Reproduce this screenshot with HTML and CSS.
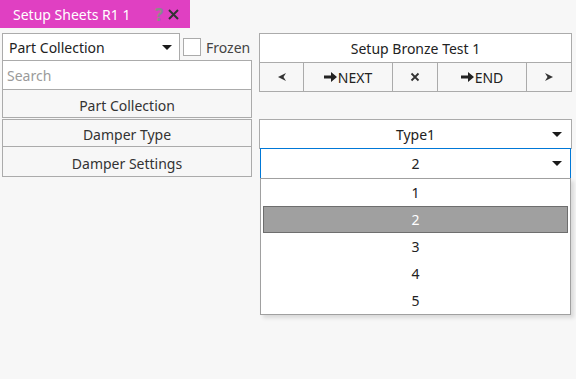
FILE: index.html
```html
<!DOCTYPE html>
<html lang="en">

<head>
  <meta charset="UTF-8" />
  <title>Setup Sheets R1 1</title>
  <link rel="stylesheet" href="styles.css">
</head>

<body>
  <div class="tab-bar">
    <div class="tab">
      <span class="tab-title">Setup Sheets R1 1</span>
      <span class="tab-help">?</span>
      <svg class="tab-close" width="11" height="11" viewBox="0 0 11 11">
        <path d="M1 1L10 10M10 1L1 10" stroke="#333" stroke-width="2" />
      </svg>
    </div>
  </div>

  <div class="content">
    <div class="left-col">
      <div class="top-row">
        <div class="combo">
          <span>Part Collection</span>
          <span class="caret"></span>
        </div>
        <label class="frozen">
          <span class="checkbox"></span>
          <span>Frozen</span>
        </label>
      </div>
      <div class="search">Search</div>
      <div class="list-btn">Part Collection</div>
      <div class="list-btn spaced">Damper Type</div>
      <div class="list-btn">Damper Settings</div>
    </div>

    <div class="right-col">
      <div class="sheet-name">Setup Bronze Test 1</div>
      <div class="nav-row">
        <div class="nav-btn">
          <svg width="10" height="10" viewBox="0 0 10 10"><path d="M1 5L9 1L6.5 5L9 9Z" fill="#333" /></svg>
        </div>
        <div class="nav-btn">
          <svg class="arrow" width="13" height="12" viewBox="0 0 13 12"><path d="M0 4.5H7V1L13 6L7 11V7.5H0Z" fill="#222" /></svg>NEXT
        </div>
        <div class="nav-btn">
          <svg width="10" height="10" viewBox="0 0 10 10"><path d="M1.5 1.5L8.5 8.5M8.5 1.5L1.5 8.5" stroke="#333" stroke-width="1.8" /></svg>
        </div>
        <div class="nav-btn">
          <svg class="arrow" width="13" height="12" viewBox="0 0 13 12"><path d="M0 4.5H7V1L13 6L7 11V7.5H0Z" fill="#222" /></svg>END
        </div>
        <div class="nav-btn">
          <svg width="10" height="10" viewBox="0 0 10 10"><path d="M9 5L1 1L3.5 5L1 9Z" fill="#333" /></svg>
        </div>
      </div>

      <div class="select">
        <span>Type1</span>
        <span class="caret"></span>
      </div>
      <div class="select-wrap">
        <div class="select active">
          <span>2</span>
          <span class="caret"></span>
        </div>
        <ul class="dropdown">
          <li>1</li>
          <li class="selected">2</li>
          <li>3</li>
          <li>4</li>
          <li>5</li>
        </ul>
      </div>
    </div>
  </div>
</body>

</html>
```

FILE: styles.css
```css
body {
  margin: 0;
  width: 576px;
  height: 379px;
  background-color: #f7f7f7;
  font-family: "Segoe UI", "Noto Sans", sans-serif;
  font-size: 14px;
  color: #222;
  overflow: hidden;
}

.tab-bar {
  display: flex;
  height: 28px;
}

.tab {
  display: flex;
  align-items: center;
  width: 190px;
  background-color: #e040c2;
  box-sizing: border-box;
  padding: 0 11px 0 13px;
}

.tab-title {
  flex: 1;
  color: #fff;
  font-size: 14px;
}

.tab-help {
  color: #8a8a8a;
  font-size: 17px;
  font-weight: bold;
  margin-right: 5px;
}

.content {
  display: flex;
  padding: 5px 0 0 2px;
  gap: 7px;
}

.left-col {
  width: 250px;
  display: flex;
  flex-direction: column;
}

.top-row {
  display: flex;
  align-items: center;
  height: 28px;
}

.combo {
  width: 178px;
  height: 28px;
  box-sizing: border-box;
  border: 1px solid #ababab;
  background-color: #fff;
  display: flex;
  align-items: center;
  padding: 0 7px 0 6px;
}

.combo span:first-child {
  flex: 1;
}

.caret {
  width: 0;
  height: 0;
  border-left: 5px solid transparent;
  border-right: 5px solid transparent;
  border-top: 5px solid #1a1a1a;
}

.frozen {
  display: flex;
  align-items: center;
  margin-left: 3px;
  color: #444;
}

.checkbox {
  width: 18px;
  height: 18px;
  box-sizing: border-box;
  border: 1px solid #ababab;
  background-color: #fff;
  margin-right: 5px;
}

.search {
  height: 30px;
  box-sizing: border-box;
  border: 1px solid #ababab;
  background-color: #fff;
  margin-top: -1px;
  padding: 0 4px;
  display: flex;
  align-items: center;
  color: #9a9a9a;
}

.list-btn {
  height: 29px;
  box-sizing: border-box;
  border: 1px solid #ababab;
  margin-top: -1px;
  padding-top: 3px;
  display: flex;
  align-items: center;
  justify-content: center;
  color: #333;
}

.list-btn.spaced {
  margin-top: 1px;
  height: 28px;
}

.list-btn:last-child {
  height: 31px;
}

.right-col {
  width: 313px;
  display: flex;
  flex-direction: column;
}

.sheet-name {
  height: 30px;
  box-sizing: border-box;
  border: 1px solid #ababab;
  background-color: #fff;
  display: flex;
  align-items: center;
  justify-content: center;
}

.nav-row {
  display: grid;
  grid-template-columns: 45px 89px 45px 89px 45px;
  height: 30px;
  margin-top: -1px;
}

.nav-btn {
  box-sizing: border-box;
  border: 1px solid #ababab;
  margin-left: -1px;
  display: flex;
  align-items: center;
  justify-content: center;
  background-color: #f7f7f7;
}

.nav-btn:first-child {
  margin-left: 0;
}

.nav-btn .arrow {
  margin-right: 1px;
}

.select {
  height: 30px;
  box-sizing: border-box;
  border: 1px solid #ababab;
  background-color: #fff;
  display: flex;
  align-items: center;
  justify-content: center;
  position: relative;
  margin-top: 27px;
}

.select .caret {
  position: absolute;
  right: 9px;
  top: 12px;
}

.select-wrap {
  position: relative;
}

.select.active {
  margin-top: -1px;
  height: 31px;
  width: 311px;
  margin-left: 1px;
  border-color: #0078d7;
}

.select.active .caret {
  right: 8px;
}

.dropdown {
  position: absolute;
  left: 1px;
  top: 29px;
  width: 311px;
  box-sizing: border-box;
  margin: 0;
  padding: 0 2px;
  list-style: none;
  background-color: #fff;
  border: 1px solid #a0a0a0;
  box-shadow: 3px 3px 4px rgba(0, 0, 0, 0.12);
}

.dropdown li {
  height: 27px;
  box-sizing: border-box;
  display: flex;
  align-items: center;
  justify-content: center;
}

.dropdown li.selected {
  background-color: #a0a0a0;
  border: 1px solid #6e6e6e;
  color: #fff;
}
```
